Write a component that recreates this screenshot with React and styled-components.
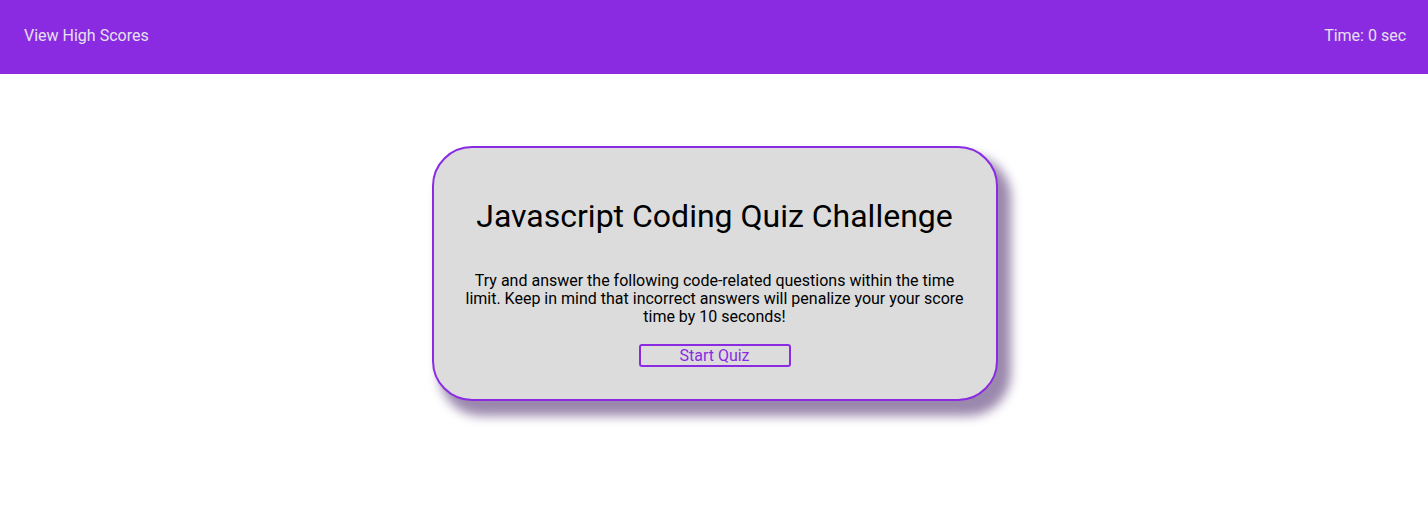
import React from "react";
import styled, { createGlobalStyle } from "styled-components";

const GlobalStyle = createGlobalStyle`
  body {
    margin: 0;
    min-height: 100vh;
    font-family: Roboto, "Liberation Sans", sans-serif;
    background: #fff;
  }
`;

const Header = styled.header`
  display: flex;
  justify-content: space-between;
  align-items: center;
  box-sizing: border-box;
  height: 74px;
  padding: 0 22px 4px 24px;
  background-color: #8a2be2;
  color: #e6e0ee;
  font-size: 16px;
`;

const HeaderLink = styled.a`
  color: inherit;
  text-decoration: none;
  cursor: pointer;
`;

const Main = styled.main`
  display: flex;
  justify-content: center;
  padding: 72px 0 120px 1px;
`;

const Card = styled.section`
  box-sizing: border-box;
  width: 566px;
  padding: 27px 30px 32px;
  background-color: #dcdcdc;
  border: 2px solid #8a2be2;
  border-radius: 40px;
  box-shadow: 10px 12px 11px 3px #9b88ad;
  text-align: center;
`;

const Title = styled.h1`
  margin: 22px 0 37px;
  font-size: 32px;
  font-weight: 400;
  color: #000;
`;

const Intro = styled.p`
  margin: 0 0 18px;
  font-size: 16px;
  line-height: 18px;
  color: #000;
`;

const StartButton = styled.button`
  box-sizing: border-box;
  width: 152px;
  height: 23px;
  padding: 0;
  border: 2px solid #8a2be2;
  border-radius: 3px;
  background: transparent;
  color: #8a2be2;
  font-family: inherit;
  font-size: 16px;
  cursor: pointer;
`;

export default function App() {
  return (
    <>
      <GlobalStyle />
      <Header>
        <HeaderLink>View High Scores</HeaderLink>
        <span>Time: 0 sec</span>
      </Header>
      <Main>
        <Card>
          <Title>Javascript Coding Quiz Challenge</Title>
          <Intro>
            Try and answer the following code-related questions within the time
            limit. Keep in mind that incorrect answers will penalize your your
            score time by 10 seconds!
          </Intro>
          <StartButton>Start Quiz</StartButton>
        </Card>
      </Main>
    </>
  );
}
